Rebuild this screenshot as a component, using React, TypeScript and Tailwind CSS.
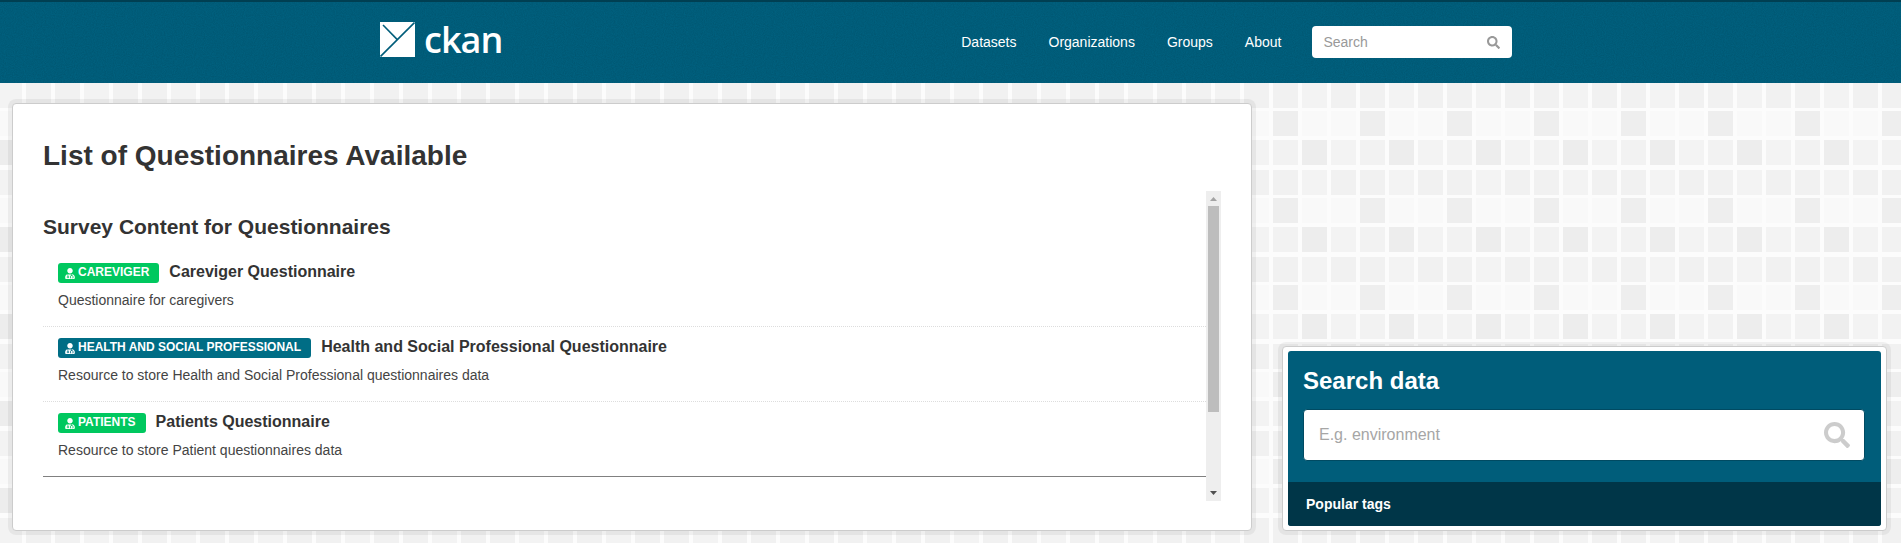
import { FaSearch, FaUserMd } from "react-icons/fa";

const sans = "font-['Liberation_Sans',Arial,sans-serif]";

function PageTexture() {
  const rows: [number, string[]][] = [
    [-4, ["#f3f3f3", "#f1f1f1", "#f1f1f1", "#f3f3f3"]],
    [24, ["#f9f9f9", "#f9f9f9", "#eeeeee", "#f9f9f9"]],
    [53, ["#ededed", "#f3f3f3", "#f2f2f2", "#ededed"]],
    [83, ["#f3f3f3", "#f1f1f1", "#f1f1f1", "#f3f3f3"]],
  ];
  const xs = [-3, 26, 55, 84];
  return (
    <svg aria-hidden="true" className="absolute inset-0 -z-10 h-full w-full">
      <defs>
        <pattern id="tiles" width="87" height="87" patternUnits="userSpaceOnUse">
          <rect width="87" height="87" fill="#fcfcfc" />
          {rows.map(([y, colors]) =>
            xs.map((x, i) => <rect key={`${y}-${x}`} x={x} y={y} width="25" height="25" fill={colors[i]} />)
          )}
        </pattern>
      </defs>
      <rect width="100%" height="100%" fill="url(#tiles)" />
    </svg>
  );
}

function HeaderGrain() {
  return (
    <svg aria-hidden="true" className="pointer-events-none absolute inset-0 h-full w-full opacity-[0.09]">
      <filter id="grain">
        <feTurbulence type="fractalNoise" baseFrequency="0.9" numOctaves="2" seed="4" />
        <feColorMatrix values="0 0 0 0 0  0 0 0 0 0  0 0 0 0 0  1.6 0 0 0 -0.4" />
      </filter>
      <rect width="100%" height="100%" filter="url(#grain)" />
    </svg>
  );
}

function Logo() {
  return (
    <svg width="35" height="35" viewBox="0 0 35 35" className="shrink-0">
      <rect width="35" height="35" fill="#fff" />
      <path d="M0.5 34.5 L34.5 0.5" stroke="#005d7a" strokeWidth="1.6" fill="none" />
      <path d="M3 3 L17.3 17.6" stroke="#005d7a" strokeWidth="1.6" fill="none" />
    </svg>
  );
}

function Item({ label, title, desc, color, last }: { label: string; title: string; desc: string; color: string; last?: boolean }) {
  return (
    <div className={`h-[75px] pl-[15px] pt-[11px] ${last ? "border-b border-solid border-[#808080]" : "border-b border-dotted border-[#ddd]"}`}>
      <div className="flex h-5 items-start">
        <span className={`flex h-5 items-center rounded-[3px] pb-[2px] pl-[7px] pr-[10px] text-[12px] font-bold leading-[18px] text-white ${color}`}>
          <FaUserMd className="mr-[3px] mt-[2px] h-[11px] w-[10px]" />
          {label}
        </span>
        <span className="ml-[10px] text-[16px] font-bold leading-[18px] text-[#333]">{title}</span>
      </div>
      <p className="mt-[7px] text-[14px] leading-5 text-[#444]">{desc}</p>
    </div>
  );
}

export default function App() {
  return (
    <div className={`relative isolate h-[543px] overflow-hidden ${sans}`}>
      <PageTexture />
      <header className="relative h-[83px] border-t-2 border-[#003f52] bg-[#00607e]">
        <HeaderGrain />
        <div className="relative flex h-[80px] items-center pl-[380px]">
          <a className="mb-[5px] flex items-center">
            <Logo />
            <span className="ml-[9px] font-['Open_Sans',sans-serif] text-[36px] font-semibold leading-none tracking-[-1px] text-white">ckan</span>
          </a>
          <nav className="ml-[459px] flex items-center gap-[32px] text-[14px] leading-5 text-white">
            <a>Datasets</a>
            <a>Organizations</a>
            <a>Groups</a>
            <a>About</a>
          </nav>
          <div className="ml-[31px] flex h-8 w-[200px] items-center justify-between rounded bg-white pl-[11px] pr-[12px] text-[14px] text-[#999]">
            <span>Search</span>
            <FaSearch className="h-[13px] w-[13px]" />
          </div>
        </div>
      </header>

      <main className="flex items-end pl-3 pt-5">
        <section className="h-[428px] w-[1240px] rounded border border-[#ccc] bg-white shadow-[0_0_0_4px_rgba(0,0,0,0.05)]">
          <h1 className="pl-[30px] pt-[34px] text-[28px] font-bold leading-[36px] text-[#333]">List of Questionnaires Available</h1>
          <div className="mt-[17px] ml-[30px] flex h-[310px]">
            <div className="w-[1163px]">
              <h2 className="pt-[24px] text-[21px] font-bold leading-6 text-[#333]">Survey Content for Questionnaires</h2>
              <div className="mt-[13px]">
                <Item label="CAREVIGER" title="Careviger Questionnaire" desc="Questionnaire for caregivers" color="bg-[#00c85f]" />
                <Item label="HEALTH AND SOCIAL PROFESSIONAL" title="Health and Social Professional Questionnaire" desc="Resource to store Health and Social Professional questionnaires data" color="bg-[#006d85]" />
                <Item label="PATIENTS" title="Patients Questionnaire" desc="Resource to store Patient questionnaires data" color="bg-[#00c85f]" last />
              </div>
            </div>
            <div className="flex w-[15px] flex-col items-center bg-[#eeeeee]">
              <svg width="7" height="4" viewBox="0 0 7 4" className="mt-[6px]"><path d="M3.5 0L7 4H0Z" fill="#a3a3a3" /></svg>
              <div className="mt-[5px] h-[206px] w-[11px] bg-[#bdbdbd]" />
              <svg width="7" height="4" viewBox="0 0 7 4" className="mt-auto mb-[6px]"><path d="M0 0H7L3.5 4Z" fill="#505050" /></svg>
            </div>
          </div>
        </section>

        <aside className="ml-[30px] h-[185px] w-[605px] rounded border border-[#ccc] bg-white px-[5px] py-[4px] shadow-[0_0_0_4px_rgba(0,0,0,0.05)]">
          <div className="flex h-full flex-col overflow-hidden rounded-[3px] bg-[#005d7a]">
            <div className="flex-1 pl-[15px] pr-4 pt-[15px]">
              <h2 className="text-[24px] font-bold leading-[30px] text-white">Search data</h2>
              <div className="mt-[13px] flex h-[52px] items-center justify-between rounded border border-[#004a62] bg-white pl-[15px] pr-[14px]">
                <span className="text-[16px] text-[#a6a6a6]">E.g. environment</span>
                <FaSearch className="h-[26px] w-[26px] text-[#ccc]" />
              </div>
            </div>
            <div className="flex h-[44px] items-center bg-[#003648] pl-[18px] text-[14px] font-bold text-white">Popular tags</div>
          </div>
        </aside>
      </main>
    </div>
  );
}
